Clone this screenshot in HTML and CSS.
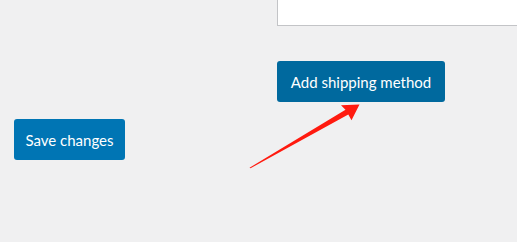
FILE: index.html
```html
<!DOCTYPE html>
<html>
<head>
<meta charset="utf-8">
<link rel="stylesheet" href="styles.css">
</head>
<body>
<div class="page">
  <div class="top-row">
    <div class="table-box"></div>
  </div>
  <div class="add-row">
    <button class="btn btn-add">Add shipping method</button>
  </div>
  <div class="save-row">
    <button class="btn btn-save">Save changes</button>
  </div>
  <svg class="arrow" width="517" height="242" viewBox="0 0 517 242">
    <polygon fill="#ff1a0f" points="249.5,167.8 345.5,109.8 341,105.3 359.5,104.6 351.5,120.3 348.3,114.5 250.5,168.3"/>
  </svg>
</div>
</body>
</html>
```
FILE: styles.css
```css
html, body {
  margin: 0;
  padding: 0;
  background: #f0f0f1;
}
.page {
  position: relative;
  width: 517px;
  height: 242px;
  overflow: hidden;
  font-family: "Open Sans", "Noto Sans", sans-serif;
}
.top-row {
  display: flex;
  padding-left: 277px;
}
.table-box {
  flex: 1;
  height: 25px;
  background: #fff;
  border-left: 1px solid #c3c4c7;
  border-bottom: 1px solid #c3c4c7;
}
.add-row {
  display: flex;
  padding-left: 277px;
  margin-top: 35px;
}
.save-row {
  display: flex;
  padding-left: 14px;
  margin-top: 17px;
}
.btn {
  border: none;
  border-radius: 3px;
  color: #fff;
  font-family: "Lato", "Open Sans", sans-serif;
  font-size: 15px;
  height: 41px;
  padding: 0;
  margin: 0;
  white-space: nowrap;
  text-align: center;
  cursor: pointer;
}
.btn-add {
  background: #00699e;
  width: 168px;
}
.btn-save {
  background: #0075b4;
  width: 111px;
}
.arrow {
  position: absolute;
  left: 0;
  top: 0;
  pointer-events: none;
}
```
